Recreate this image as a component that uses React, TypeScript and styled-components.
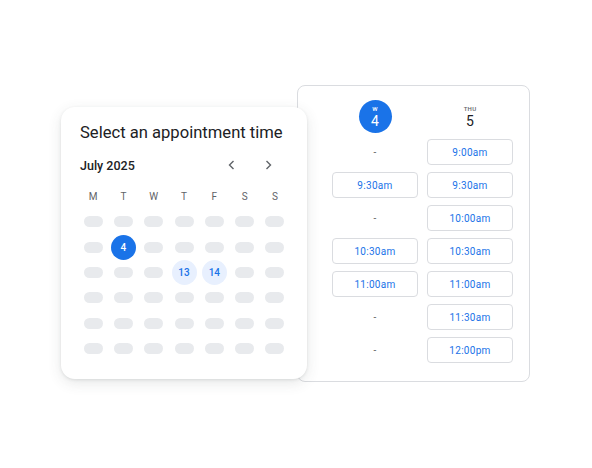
import React from 'react';
import styled, { createGlobalStyle } from 'styled-components';

const GlobalStyle = createGlobalStyle`
  html, body {
    margin: 0;
    padding: 0;
    background: #ffffff;
    font-family: Roboto, "Liberation Sans", sans-serif;
  }
`;

const blue = '#1a73e8';

type Slot = string | null;
const leftSlots: Slot[] = [null, '9:30am', null, '10:30am', '11:00am', null, null];
const rightSlots: Slot[] = ['9:00am', '9:30am', '10:00am', '10:30am', '11:00am', '11:30am', '12:00pm'];

// which cell in the 6x7 grid carries a date
const marked: Record<string, { label: string; kind: 'selected' | 'available' }> = {
  '1-1': { label: '4', kind: 'selected' },
  '2-3': { label: '13', kind: 'available' },
  '2-4': { label: '14', kind: 'available' },
};

const App: React.FC = () => {
  return (
    <Page>
      <GlobalStyle />
      <Card>
        <Title>Select an appointment time</Title>
        <MonthRow>
          <Month>July 2025</Month>
          <Arrows>
            <ArrowButton aria-label="previous">
              <svg width="12" height="12" viewBox="0 0 12 12">
                <path d="M7.5 2 L3.5 6 L7.5 10" fill="none" stroke="#5f6368" strokeWidth="1.4" />
              </svg>
            </ArrowButton>
            <ArrowButton aria-label="next">
              <svg width="12" height="12" viewBox="0 0 12 12">
                <path d="M4.5 2 L8.5 6 L4.5 10" fill="none" stroke="#5f6368" strokeWidth="1.4" />
              </svg>
            </ArrowButton>
          </Arrows>
        </MonthRow>
        <Grid>
          {['M', 'T', 'W', 'T', 'F', 'S', 'S'].map((d, i) => (
            <WeekDay key={i}>{d}</WeekDay>
          ))}
          {Array.from({ length: 6 }).map((_, r) =>
            Array.from({ length: 7 }).map((__, c) => {
              const m = marked[`${r}-${c}`];
              return (
                <Cell key={`${r}-${c}`}>
                  {m ? <DateDot $kind={m.kind}>{m.label}</DateDot> : <Pill />}
                </Cell>
              );
            })
          )}
        </Grid>
      </Card>
      <Panel>
        <Columns>
          <DayHead>
            <DayCircle>
              <DayName $light>W</DayName>
              <DayNum $light>4</DayNum>
            </DayCircle>
          </DayHead>
          <DayHead>
            <DayPlain>
              <DayName>THU</DayName>
              <DayNum>5</DayNum>
            </DayPlain>
          </DayHead>
          {leftSlots.map((s, i) => (
            <React.Fragment key={i}>
              {s ? <SlotButton>{s}</SlotButton> : <Empty>-</Empty>}
              {rightSlots[i] ? <SlotButton>{rightSlots[i]}</SlotButton> : <Empty>-</Empty>}
            </React.Fragment>
          ))}
        </Columns>
      </Panel>
    </Page>
  );
};

const Page = styled.div`
  width: 592px;
  height: 468px;
  box-sizing: border-box;
  padding: 85px 0 0 61px;
  display: flex;
  align-items: flex-start;
`;

const Card = styled.div`
  position: relative;
  z-index: 1;
  margin-top: 22px;
  width: 246px;
  height: 272px;
  box-sizing: border-box;
  padding: 15px 19px 0 19px;
  background: #ffffff;
  border-radius: 14px;
  box-shadow: 0 1px 3px rgba(60, 64, 67, 0.12), 0 4px 14px rgba(60, 64, 67, 0.12);
`;

const Title = styled.h1`
  margin: 0;
  font-size: 16.6px;
  font-weight: 400;
  color: #202124;
  line-height: 22px;
  white-space: nowrap;
`;

const MonthRow = styled.div`
  display: flex;
  align-items: center;
  justify-content: space-between;
  margin-top: 12px;
  height: 18px;
`;

const Month = styled.span`
  font-size: 12.5px;
  font-weight: 500;
  color: #202124;
`;

const Arrows = styled.div`
  display: flex;
  gap: 24px;
  margin-right: 14px;
`;

const ArrowButton = styled.span`
  display: flex;
  width: 12px;
  height: 12px;
`;

const Grid = styled.div`
  display: grid;
  grid-template-columns: repeat(7, 30.3px);
  grid-auto-rows: 25.3px;
  margin-top: 10px;
  margin-left: -2px;
`;

const WeekDay = styled.div`
  display: flex;
  align-items: center;
  justify-content: center;
  font-size: 10px;
  color: #5f6368;
  height: 25px;
`;

const Cell = styled.div`
  display: flex;
  align-items: center;
  justify-content: center;
`;

const Pill = styled.div`
  width: 19px;
  height: 11px;
  border-radius: 6px;
  background: #e8eaed;
`;

const DateDot = styled.div<{ $kind: 'selected' | 'available' }>`
  width: 25px;
  height: 25px;
  border-radius: 50%;
  display: flex;
  align-items: center;
  justify-content: center;
  font-size: 10px;
  font-weight: 500;
  background: ${(p) => (p.$kind === 'selected' ? blue : '#e8f0fe')};
  color: ${(p) => (p.$kind === 'selected' ? '#ffffff' : blue)};
`;

const Panel = styled.div`
  margin-left: -10px;
  width: 233px;
  height: 297px;
  box-sizing: border-box;
  padding: 14px 17px 0 34px;
  border: 1px solid #dadce0;
  border-radius: 8px;
  background: #ffffff;
`;

const Columns = styled.div`
  display: grid;
  grid-template-columns: 86px 86px;
  column-gap: 9px;
  row-gap: 7px;
  grid-template-rows: 32px;
  grid-auto-rows: 26px;
`;

const DayHead = styled.div`
  display: flex;
  justify-content: center;
  align-items: flex-start;
`;

const DayCircle = styled.div`
  flex: none;
  width: 33px;
  height: 33px;
  border-radius: 50%;
  background: ${blue};
  display: flex;
  flex-direction: column;
  align-items: center;
  justify-content: center;
`;

const DayPlain = styled.div`
  flex: none;
  height: 33px;
  display: flex;
  flex-direction: column;
  align-items: center;
  justify-content: center;
`;

const DayName = styled.span<{ $light?: boolean }>`
  font-size: 6px;
  font-weight: 500;
  line-height: 8px;
  letter-spacing: 0.3px;
  color: ${(p) => (p.$light ? '#ffffff' : '#5f6368')};
`;

const DayNum = styled.span<{ $light?: boolean }>`
  font-size: 14px;
  line-height: 16px;
  color: ${(p) => (p.$light ? '#ffffff' : '#202124')};
`;

const SlotButton = styled.div`
  box-sizing: border-box;
  border: 1px solid #dadce0;
  border-radius: 4px;
  display: flex;
  align-items: center;
  justify-content: center;
  font-size: 10px;
  font-weight: 400;
  color: ${blue};
  letter-spacing: 0.3px;
`;

const Empty = styled.div`
  display: flex;
  align-items: center;
  justify-content: center;
  font-size: 10px;
  color: #5f6368;
`;

export default App;
